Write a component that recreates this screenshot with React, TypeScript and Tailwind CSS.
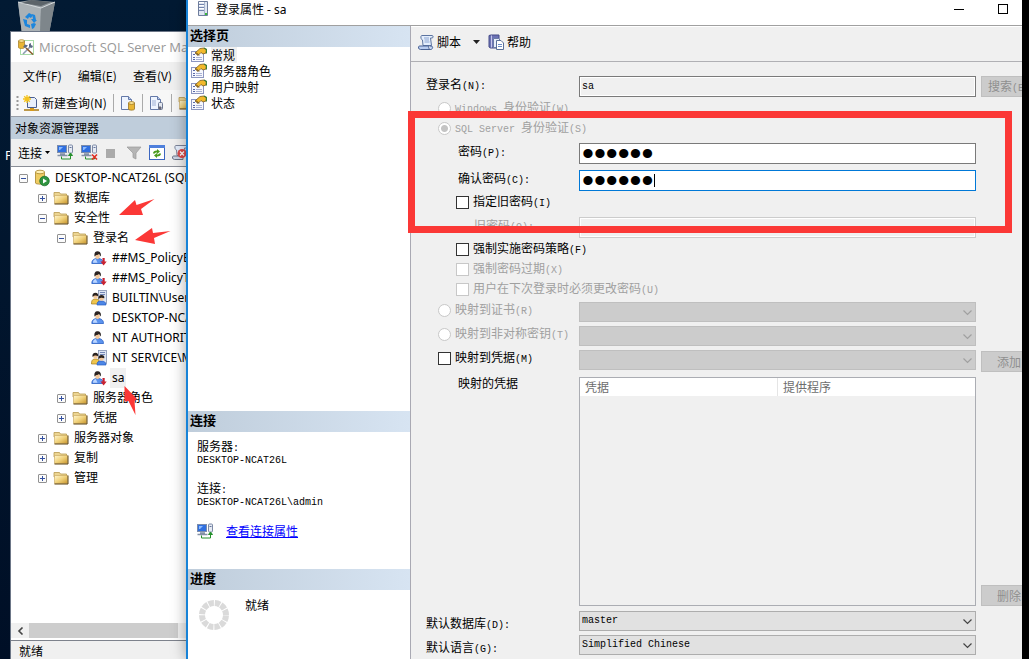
import type { ReactNode } from "react";

const cjk = "font-['Noto_Sans_CJK_SC',sans-serif]";

/* Han characters at 12px, Latin runs in a 6px-wide monospace face. */
function Mono({ text }: { text: string }) {
  const parts = text.match(/[\x00-\x7f]+|[^\x00-\x7f]+/g) ?? [];
  return (
    <>
      {parts.map((p, i) =>
        p.charCodeAt(0) < 128 ? (
          <span key={i} className="whitespace-pre font-['Liberation_Mono',monospace] text-[10px]">{p}</span>
        ) : (
          <span key={i}>{p}</span>
        ),
      )}
    </>
  );
}

function Folder() {
  return (
    <svg width="16" height="14" viewBox="0 0 16 14" className="shrink-0">
      <defs>
        <linearGradient id="fold" x1="0" y1="0" x2="1" y2="1">
          <stop offset="0" stopColor="#fff6cf" />
          <stop offset=".5" stopColor="#f0d27c" />
          <stop offset="1" stopColor="#c9962c" />
        </linearGradient>
      </defs>
      <path d="M1 3V1.500h5.500l1 1.500h6v3H1z" fill="#ecd592" stroke="#b8994f" strokeWidth=".8" />
      <path d="M1.500 4.500h13v8h-13z" fill="url(#fold)" stroke="#c4a35a" strokeWidth=".6" />
      <path d="M1.500 13h13.500V4.500" fill="none" stroke="#5e4410" />
    </svg>
  );
}

function Person({ mark }: { mark?: boolean }) {
  return (
    <svg width="16" height="16" viewBox="0 0 16 16" className="shrink-0">
      <path d="M.8 13.500c0-3.500 2-5 5.700-5s6 1.500 6 5z" fill="#5b93ee" stroke="#2a5fc4" strokeWidth=".8" />
      <path d="M2 12.800c0-2.300 1-3.300 2.800-3.700l1.700 3.700z" fill="#bcd6ff" />
      <ellipse cx="6.500" cy="6" rx="2.300" ry="3" fill="#f1c79c" />
      <path d="M3.500 6.500C3 2.500 4.500 1.200 6.500 1.200s4 1.300 3.300 5.300C9 5.500 8.500 4.500 8 4c-1 1-2.500 1-3 1.200z" fill="#2b2320" />
      {mark && <path d="M11.500 8h2.200v3.500h2L12.600 15.500 9.500 11.500h2z" fill="#c92332" />}
    </svg>
  );
}

function Group() {
  return (
    <svg width="16" height="16" viewBox="0 0 16 16" className="shrink-0">
      <rect x="7.500" y=".5" width="8" height="13" fill="#dfe6f3" stroke="#8290b0" strokeWidth=".8" />
      <path d="M9 2.500h5M9 4.500h5" stroke="#7487b5" />
      <path d="M.5 14c0-3 .5-5 4-5s4 2 4 5z" fill="#f0c64c" stroke="#a07a20" strokeWidth=".7" />
      <circle cx="4.500" cy="6.500" r="2.300" fill="#f1c79c" />
      <path d="M1.500 7C1 4 2.500 2.800 4.500 2.800S7.500 4 7.200 6.200C5 5.500 4 5 1.500 7z" fill="#2b2320" />
      <path d="M6 15c0-3 1-4 4-4s5 1 5 4z" fill="#4c86e6" stroke="#2a5fc4" strokeWidth=".7" />
      <circle cx="10.500" cy="8.500" r="2.200" fill="#f1c79c" />
      <path d="M7.500 9C7 6 8.500 4.900 10.500 4.900s3.200 1 2.800 3.400c-2-.5-3-1-5.800.7z" fill="#2b2320" />
    </svg>
  );
}

function ServerDb() {
  return (
    <svg width="16" height="18" viewBox="0 0 16 18" className="shrink-0">
      <path d="M1.500 3v11c0 1.500 9 1.500 9 0V3z" fill="#efcc62" stroke="#a8852c" strokeWidth=".8" />
      <ellipse cx="6" cy="3" rx="4.500" ry="1.800" fill="#fff0b4" stroke="#a8852c" strokeWidth=".8" />
      <circle cx="10.500" cy="12" r="4.800" fill="#2f9440" stroke="#156b28" strokeWidth=".7" />
      <path d="M9 9.500l4 2.500-4 2.500z" fill="#fff" />
    </svg>
  );
}

function Connect({ cross }: { cross?: boolean }) {
  return (
    <svg width="17" height="17" viewBox="0 0 17 17" className="shrink-0">
      <rect x=".5" y="1.500" width="9" height="7" fill="#2f6fe0" stroke="#7b8cab" />
      <path d="M2 3h4L3 6H2z" fill="#8dbcff" />
      <path d="M3 10h5M.5 11.500h10" stroke="#8390a6" strokeWidth="1.500" />
      <rect x="11.500" y="1" width="4" height="8" rx="1" fill="#e6ebf4" stroke="#7d8aa6" />
      <path d="M12.500 3.500h2" stroke="#66759a" />
      <path d="M4.500 12.500v2.500h9v-2" fill="none" stroke="#25902c" />
      {cross ? (
        <path d="M11 10.500l5 5M16 10.500l-5 5" stroke="#df2c20" strokeWidth="1.600" />
      ) : (
        <path d="M13.500 14v-4M11.500 11.500l2-2.500 2 2.500z" fill="#25902c" stroke="#25902c" />
      )}
    </svg>
  );
}

function PageDoc({ kind }: { kind: "db" | "server" }) {
  return (
    <svg width="16" height="16" viewBox="0 0 16 16" className="shrink-0">
      <path d="M1.500 1.500h7l3 3v10h-10z" fill="#eef4ff" stroke="#6479a8" />
      <path d="M8.500 1.500v3h3" fill="#b9cbee" stroke="#6479a8" />
      {kind === "db" ? (
        <>
          <path d="M8.500 8v6c0 1.500 6 1.500 6 0V8z" fill="#e9b634" stroke="#9b7420" strokeWidth=".8" />
          <ellipse cx="11.500" cy="8" rx="3" ry="1.400" fill="#ffe99c" stroke="#9b7420" strokeWidth=".8" />
        </>
      ) : (
        <>
          <path d="M3 6h4M3 8h4M3 10h4" stroke="#9fb0d4" />
          <rect x="9.500" y="7.500" width="4" height="7" rx="1" fill="#e4e8f0" stroke="#6c7894" />
          <path d="M9 13l2-2 2 2-2 2z" fill="#667" />
        </>
      )}
    </svg>
  );
}

function PropertySheet() {
  return (
    <svg width="16" height="16" viewBox="0 0 16 16" className="shrink-0">
      <rect x=".5" y="4.500" width="12" height="10" fill="#f7f8fd" stroke="#8c96c0" />
      <path d="M2 7.500h2M2 10.500h2M2 12.500h2" stroke="#596aa8" />
      <path d="M5 10.500h6M5 12.500h6" stroke="#a9b2d4" />
      <path d="M4 6l5-4.500 4-.5 2.500 2-.5 3-3 1-2-1.500-3 3z" fill="#f2b92c" stroke="#7b5a22" strokeWidth=".8" />
      <path d="M5 5.500l3 3" stroke="#4b3a28" />
      <path d="M13 1l2.500 1.500v4" stroke="#3f7d34" fill="none" strokeWidth="1.300" />
    </svg>
  );
}

function Scroll() {
  return (
    <svg width="17" height="17" viewBox="0 0 17 17" className="shrink-0">
      <path d="M4 1.500h10c1.500 0 1.500 2.500 0 2.500h-1.500l1 7.500H5L4.500 6C3 6 2 1.500 4 1.500z" fill="#e4eefc" stroke="#5c74a0" />
      <path d="M6 4h5M6.500 6h4.500M6.500 8h5" stroke="#8aa3cf" />
      <path d="M1.500 12h9.500c-.8 1.500 0 3.500 1.500 3.500H2.500C0 15.500 0 12 1.500 12zM12.500 15.500c2.500 0 3-3.500.5-3.500h-1" fill="#b9cdf0" stroke="#4a6394" />
    </svg>
  );
}

function Help() {
  return (
    <svg width="17" height="17" viewBox="0 0 17 17" className="shrink-0">
      <path d="M1 1.500L3 1h8v13H2.500L1 13z" fill="#6d73b5" stroke="#454b88" />
      <path d="M3.500 1.500v12" stroke="#c5c8ea" />
      <path d="M5.500 4.500h5l2 2v7h-7z" fill="#e9effb" stroke="#6a7ca6" />
      <path d="M8.500 6.500h4.500l2.500 2.500v6.500h-7z" fill="#fff" stroke="#5a7099" />
      <path d="M10 10.500h4M10 12.500h4" stroke="#6c8cc7" />
    </svg>
  );
}

function Spinner() {
  return (
    <svg width="32" height="32" viewBox="0 0 32 32">
      <circle cx="16" cy="16" r="12" fill="none" stroke="#dadada" strokeWidth="6" strokeDasharray="5.283 1" strokeDashoffset="-.5" />
    </svg>
  );
}

function Expander({ open }: { open: boolean }) {
  return (
    <svg width="9" height="9" viewBox="0 0 9 9" className="shrink-0">
      <rect x=".5" y=".5" width="8" height="8" rx=".5" fill="#fbfbfb" stroke="#919191" />
      <path d={open ? "M2 4.500h5" : "M2 4.500h5M4.500 2v5"} stroke="#3350a0" />
    </svg>
  );
}

function RecycleBin() {
  return (
    <svg width="40" height="34" viewBox="0 0 40 34">
      <path d="M1 2L14 0l24 2-6 32H5z" fill="#8f979c" />
      <path d="M1 2l23 6-1 26H5z" fill="#aab1b5" />
      <path d="M24 8l14-6-6 32h-9z" fill="#7e868b" />
      <path d="M1 2l23 6 14-6" fill="none" stroke="#d5dadd" />
      <path d="M5 3l9-3 20 2-10 4z" fill="#5c646a" />
      <g fill="#1d86dd">
        <path d="M8 17l4-4 4 2-2 3-2-1-1 2z" />
        <path d="M15 14l3 1 1 5 1 0-3 3-3-4h2z" />
        <path d="M6 19l4 1 0 4 3 1v3l-5-2z" />
        <path d="M14 24l3-1 2 1-2 4-2 1z" />
      </g>
    </svg>
  );
}

type Node = { depth: number; label: string; icon: ReactNode; open?: boolean; selected?: boolean };

const tree: Node[] = [
  { depth: 0, label: "DESKTOP-NCAT26L (SQL Server)", icon: <ServerDb />, open: true },
  { depth: 1, label: "数据库", icon: <Folder />, open: false },
  { depth: 1, label: "安全性", icon: <Folder />, open: true },
  { depth: 2, label: "登录名", icon: <Folder />, open: true },
  { depth: 3, label: "##MS_PolicyEventProcessingLogin##", icon: <Person mark /> },
  { depth: 3, label: "##MS_PolicyTsqlExecutionLogin##", icon: <Person mark /> },
  { depth: 3, label: "BUILTIN\\Users", icon: <Group /> },
  { depth: 3, label: "DESKTOP-NCAT26L\\admin", icon: <Person /> },
  { depth: 3, label: "NT AUTHORITY\\SYSTEM", icon: <Person /> },
  { depth: 3, label: "NT SERVICE\\MSSQLSERVER", icon: <Group /> },
  { depth: 3, label: "sa", icon: <Person mark />, selected: true },
  { depth: 2, label: "服务器角色", icon: <Folder />, open: false },
  { depth: 2, label: "凭据", icon: <Folder />, open: false },
  { depth: 1, label: "服务器对象", icon: <Folder />, open: false },
  { depth: 1, label: "复制", icon: <Folder />, open: false },
  { depth: 1, label: "管理", icon: <Folder />, open: false },
];

const indent = ["pl-2", "pl-[27px]", "pl-[46px]", "pl-[80px]"];

function StudioWindow() {
  return (
    <section className="absolute bottom-0 left-[10px] top-[31px] flex w-[420px] flex-col overflow-hidden border-l border-t border-[#6c7687] bg-[#f0f0f0] whitespace-nowrap text-xs text-black">
      <header className="flex h-[30px] shrink-0 items-center gap-1 bg-white pl-[7px]">
        <svg width="17" height="17" viewBox="0 0 17 17" className="shrink-0">
          <rect x="2.500" y="1.500" width="13" height="14" fill="none" stroke="#51b84f" strokeDasharray="1 1" />
          <path d="M.5 2v6.500c0 1.300 6 1.300 6 0V2z" fill="#e9b634" stroke="#a07a20" strokeWidth=".7" />
          <ellipse cx="3.500" cy="2" rx="3" ry="1.300" fill="#ffe99c" stroke="#a07a20" strokeWidth=".7" />
          <path d="M5 15l8-8" stroke="#8c9bb2" strokeWidth="1.600" />
          <path d="M8 9l7 6.500" stroke="#8a5a2c" strokeWidth="1.600" />
          <path d="M5 8l2-2.500 3 1-2.500 2.500zM11 5l2-1v2l2 1-1 2-3-1z" fill="#5c6c86" />
        </svg>
        <h1 className="font-['Open_Sans','Noto_Sans',sans-serif] text-[13px] leading-4 text-[#999]">Microsoft SQL Server Management Studio</h1>
      </header>
      <nav className="flex h-[28px] shrink-0 items-center gap-4 pl-3">
        <button>文件(F)</button>
        <button>编辑(E)</button>
        <button>查看(V)</button>
      </nav>
      <div className="flex h-[26px] shrink-0 items-center bg-[#f7f7f7] pl-[5px]">
        <svg width="3" height="16" viewBox="0 0 3 16" className="mr-1 shrink-0">
          <path d="M1.500 1v15" stroke="#999" strokeWidth="2" strokeDasharray="2 2" />
        </svg>
        <button className="flex items-center gap-[2px]">
          <svg width="17" height="17" viewBox="0 0 17 17">
            <path d="M4.500 2.500h7l2 2v8h-9z" fill="#e8effc" stroke="#4b5f8f" />
            <path d="M4 0v8M0 4h8M1.200 1.200l5.600 5.600M6.800 1.200L1.200 6.800" stroke="#f5c31c" strokeWidth="1.300" />
            <path d="M1 15h15" stroke="#a87a10" strokeWidth="1.500" />
            <rect x="7" y="13" width="4" height="3" fill="#d79a1c" />
          </svg>
          新建查询(N)
        </button>
        <span className="mx-[6px] h-[18px] w-px bg-[#aaa]" />
        <button aria-label="数据库引擎查询"><PageDoc kind="db" /></button>
        <span className="mx-[6px] h-[18px] w-px bg-[#aaa]" />
        <button aria-label="分析服务查询"><PageDoc kind="server" /></button>
        <span className="mx-[6px] h-[18px] w-px bg-[#aaa]" />
        <Folder />
      </div>
      <h2 className="flex h-[23px] shrink-0 items-center border-t border-[#9a9fa8] bg-[#bfcddb] pl-1 text-xs">对象资源管理器</h2>
      <div className="flex h-[28px] shrink-0 items-center border-b border-[#8b8f98] pl-[7px]">
        <button className="mr-[6px] flex items-center gap-[2px]">
          连接
          <svg width="7" height="4" viewBox="0 0 7 4"><path d="M1 0h5L3.500 3z" /></svg>
        </button>
        <div className="flex items-center gap-[7px]">
          <button aria-label="连接对象"><Connect /></button>
          <button aria-label="断开连接"><Connect cross /></button>
          <svg width="14" height="12" viewBox="0 0 14 12" className="shrink-0"><rect x="1" y="2" width="9" height="9" fill="#aaa" /></svg>
          <svg width="16" height="14" viewBox="0 0 16 14" className="shrink-0"><path d="M1 1h14l-5 6v6l-3-1.500V7z" fill="#b5b5b5" stroke="#999" strokeWidth=".7" /></svg>
          <svg width="16" height="15" viewBox="0 0 16 15" className="shrink-0">
            <rect x=".5" y=".5" width="15" height="14" fill="#fff" stroke="#3c66c0" />
            <rect x="0" y="0" width="16" height="3" fill="#4f80dc" />
            <path d="M4 8.500c0-2 1.500-3 4-3V4l3 2.500L8 9V7.500c-1.500 0-2 .5-2 1zM12 8.500c0 2-1.500 3-4 3V13l-3-2.500L8 8v1.500c1.500 0 2-.5 2-1z" fill="#4b9b1d" />
          </svg>
          <svg width="17" height="17" viewBox="0 0 17 17" className="shrink-0">
            <path d="M4 1.500h10c1.500 0 1.500 2.500 0 2.500h-1.500l1 7.500H5L4.500 6C3 6 2 1.500 4 1.500z" fill="#e4eefc" stroke="#7d8499" />
            <path d="M1.500 12h9.500v3.500H2.500C0 15.500 0 12 1.500 12z" fill="#ccd4e4" stroke="#6b7488" />
            <circle cx="10" cy="9.500" r="4.500" fill="#dc4a4a" />
            <path d="M8 7.500l4 4M12 7.500l-4 4" stroke="#fff" strokeWidth="1.300" />
          </svg>
        </div>
      </div>
      <ul className="min-h-0 flex-1 overflow-hidden bg-white pt-px">
        {tree.map((n) => (
          <li key={n.label} className={`flex h-5 items-center ${indent[n.depth]}`}>
            {n.open !== undefined && <span className="mr-[6px]"><Expander open={n.open} /></span>}
            {n.icon}
            <span className={`ml-[3px] px-[2px] font-['Noto_Sans','Noto_Sans_CJK_SC',sans-serif] leading-5 ${n.selected ? "bg-[#f0f0f0]" : ""}`}>{n.label}</span>
          </li>
        ))}
      </ul>
      <div className="flex h-[18px] shrink-0 items-start border-b border-[#7d828c] bg-white">
        <span className="flex h-[15px] w-[18px] items-center justify-center bg-[#f0f0f0]">
          <svg width="7" height="8" viewBox="0 0 7 8"><path d="M5.500.5L2 4l3.500 3.500" fill="none" stroke="#444" strokeWidth="1.600" /></svg>
        </span>
        <span className="h-[15px] w-[149px] bg-[#cdcdcd]" />
        <span className="h-[15px] flex-1 bg-[#f0f0f0]" />
      </div>
      <footer className="flex h-[18px] shrink-0 items-end pl-2 leading-4">就绪</footer>
    </section>
  );
}

function Arrows() {
  return (
    <svg width="80" height="230" viewBox="0 0 80 230" className="pointer-events-none absolute left-[110px] top-[190px]">
      <g fill="#fb3836">
        <path d="M9 25L25 10l1.500 5L44.500 9 31 19l2 6z" />
        <path d="M25 50L42 38l1 5 17.500-2L44 48l1 6z" />
        <path d="M14.500 196l12.500 13-2.500 2 1 14-7-14-4 .5z" />
      </g>
    </svg>
  );
}

function SectionHeader({ children }: { children: ReactNode }) {
  return <h3 className="h-[21px] shrink-0 bg-gradient-to-r from-[#bfcddb] to-[#d7e4f2] pl-[2px] text-[13px] font-bold leading-[18px]">{children}</h3>;
}

const field = "h-[21px] w-full min-w-0 border px-[2px] font-['Liberation_Mono',monospace] text-[10px] outline-none";

const passwordField = "block h-[21px] w-full border bg-white px-[2px] font-['Liberation_Sans',sans-serif] text-[34px] leading-none outline-none";

function Row({ label, id, pad, dim, gap, align = "items-start", children, action }: {
  label: string; id?: string; pad: string; dim?: boolean; gap: string; align?: string; children: ReactNode; action?: string;
}) {
  return (
    <div className={`flex shrink-0 ${gap} ${align}`}>
      <label htmlFor={id} className={`h-4 w-[168px] shrink-0 leading-4 ${pad} ${dim ? "text-[#a0a0a0]" : ""}`}><Mono text={label} /></label>
      <div className="min-w-0 flex-1">{children}</div>
      <div className="w-[46px] shrink-0 pl-[5px]">
        {action && <ActionButton>{action}</ActionButton>}
      </div>
    </div>
  );
}

function ActionButton({ children }: { children: string }) {
  return <button disabled className="block h-[21px] w-[56px] border border-[#bfbfbf] bg-[#ccc] text-[#8f8f8f]"><Mono text={children} /></button>;
}

function Option({ type, label, pad, gap = "", checked, disabled }: {
  type: "radio" | "checkbox"; label: string; pad: string; gap?: string; checked?: boolean; disabled?: boolean;
}) {
  return (
    <label className={`flex h-5 shrink-0 items-center gap-1 ${pad} ${gap} ${disabled ? "text-[#a0a0a0]" : ""}`}>
      <Tick type={type} checked={checked} disabled={disabled} />
      <span className="whitespace-nowrap leading-4"><Mono text={label} /></span>
    </label>
  );
}

function Tick({ type, checked, disabled }: { type: "radio" | "checkbox"; checked?: boolean; disabled?: boolean }) {
  return (
    <input
      type={type}
      name={type === "radio" ? "auth" : undefined}
      defaultChecked={checked}
      disabled={disabled}
      className={`h-[13px] w-[13px] shrink-0 appearance-none border bg-white ${type === "radio" ? "rounded-full checked:bg-[radial-gradient(circle,#c4c4c4_0_3px,#fff_4px)]" : ""} ${disabled ? "border-[#c8c8c8]" : "border-[#333]"}`}
    />
  );
}

function Drop({ id, value, disabled, label }: { id: string; value?: string; disabled?: boolean; label?: string }) {
  return (
    <div className="relative">
      <select id={id} aria-label={label} disabled={disabled} className={`block h-5 w-full appearance-none border px-[2px] font-['Liberation_Mono',monospace] text-[10px] opacity-100 ${disabled ? "border-[#bfbfbf] bg-[#ccc]" : "border-[#adadad] bg-[#e1e1e1]"}`}>
        <option>{value ?? ""}</option>
      </select>
      <svg width="9" height="6" viewBox="0 0 9 6" className="pointer-events-none absolute right-1 top-2">
        <path d="M.5.5l4 4 4-4" fill="none" stroke={disabled ? "#a0a0a0" : "#444"} strokeWidth="1.200" />
      </svg>
    </div>
  );
}

function OptionDrop({ type, label, id, disabled, gap, action }: {
  type: "radio" | "checkbox"; label: string; id: string; disabled?: boolean; gap: string; action?: string;
}) {
  return (
    <div className={`flex h-5 shrink-0 items-start ${gap}`}>
      <label className={`flex h-4 w-[168px] shrink-0 items-center gap-1 pl-[27px] leading-4 ${disabled ? "text-[#a0a0a0]" : ""}`}>
        <Tick type={type} disabled={disabled} />
        <span className="whitespace-nowrap"><Mono text={label} /></span>
      </label>
      <div className="min-w-0 flex-1"><Drop id={id} label={label} disabled /></div>
      <div className="w-[46px] shrink-0 pl-[5px] pt-px">{action && <ActionButton>{action}</ActionButton>}</div>
    </div>
  );
}

function LoginForm() {
  return (
    <form className="flex min-h-0 flex-1 flex-col overflow-hidden pb-1">
      <Row label="登录名(N):" id="login" pad="pl-[15px]" gap="mt-[14px]" action="搜索(E)">
        <input id="login" readOnly defaultValue="sa" className={`${field} block border-[#7a7a7a] bg-[#f0f0f0] shadow-[inset_0_0_0_1px_#fff]`} />
      </Row>
      <Option type="radio" label="Windows 身份验证(W)" pad="pl-[27px]" gap="mt-px" disabled />
      <Option type="radio" label="SQL Server 身份验证(S)" pad="pl-[27px]" checked disabled />
      <Row label="密码(P):" id="pw" pad="pl-[47px]" gap="mt-[5px]">
        <input id="pw" type="password" defaultValue="secret" className={`${passwordField} border-[#7a7a7a]`} />
      </Row>
      <Row label="确认密码(C):" id="pw2" pad="pl-[47px]" gap="mt-[6px]">
        <div className="relative">
          <input id="pw2" type="password" defaultValue="secret" className={`${passwordField} border-[#0078d7]`} />
          <span className="absolute left-[75px] top-1 h-[13px] w-px bg-black" />
        </div>
      </Row>
      <Option type="checkbox" label="指定旧密码(I)" pad="pl-[45px]" gap="mt-px" />
      <Row label="旧密码(O):" id="old" pad="pl-[63px]" gap="mt-[5px]" dim>
        <input id="old" type="password" disabled className={`${field} block border-[#ccc] bg-[#f0f0f0] shadow-[inset_0_0_0_1px_#fff]`} />
      </Row>
      <Option type="checkbox" label="强制实施密码策略(F)" pad="pl-[45px]" gap="mt-px" />
      <Option type="checkbox" label="强制密码过期(X)" pad="pl-[45px]" disabled />
      <Option type="checkbox" label="用户在下次登录时必须更改密码(U)" pad="pl-[45px]" disabled />
      <OptionDrop type="radio" label="映射到证书(R)" id="cert" disabled gap="mt-[3px]" />
      <OptionDrop type="radio" label="映射到非对称密钥(T)" id="key" disabled gap="mt-1" />
      <OptionDrop type="checkbox" label="映射到凭据(M)" id="cred" gap="mt-1" action="添加" />
      <div className="mt-[7px] flex min-h-0 flex-1">
        <span className="w-[168px] shrink-0 pl-[47px] leading-3">映射的凭据</span>
        <div className="min-w-0 flex-1 border border-[#abadb3]">
          <table className="w-full table-fixed border-collapse bg-white text-[#6d6d6d]">
            <thead>
              <tr className="h-[18px]">
                <th className="border-r border-[#e5e5e5] p-0 pl-[5px] text-left font-normal leading-[18px]">凭据</th>
                <th className="p-0 pl-[5px] text-left font-normal leading-[18px]">提供程序</th>
              </tr>
            </thead>
          </table>
        </div>
        <div className="flex w-[46px] shrink-0 items-end pl-[5px]">
          <div className="shrink-0"><ActionButton>删除</ActionButton></div>
        </div>
      </div>
      <Row label="默认数据库(D):" id="db" pad="pl-[15px]" gap="mt-[5px]" align="items-end"><Drop id="db" value="master" /></Row>
      <Row label="默认语言(G):" id="lang" pad="pl-[15px]" gap="mt-1" align="items-end"><Drop id="lang" value="Simplified Chinese" /></Row>
    </form>
  );
}

function LoginDialog() {
  const pages = ["常规", "服务器角色", "用户映射", "状态"];
  return (
    <section className="absolute inset-y-0 left-[186px] right-[7px] flex flex-col border-l-2 border-[#1883d7] bg-white text-xs text-black shadow-[0_0_14px_rgba(0,0,0,0.35)]">
      <header className="flex h-[25px] shrink-0 items-start pl-2 pr-[14px]">
        <svg width="14" height="18" viewBox="0 0 14 18" className="shrink-0">
          <path d="M2.500 1.500h9v14h-9z" fill="#dfe6f2" stroke="#6d7c9c" />
          <path d="M8.500 2v13" stroke="#a9b5cc" />
          <path d="M3 4.500h5M3 7.500h5M3 10.500h5" stroke="#7485ae" />
          <path d="M3 2.500h5M3 5.500h5M3 8.500h5" stroke="#fff" />
          <rect x="9" y="13" width="2" height="2" fill="#38b838" />
        </svg>
        <h2 className="ml-[6px] font-['Noto_Sans','Noto_Sans_CJK_SC',sans-serif] leading-5">登录属性 - sa</h2>
        <div className="ml-auto flex gap-[34px] pt-1">
          <button aria-label="最小化"><svg width="10" height="10" viewBox="0 0 10 10"><path d="M0 5.500h10" stroke="#000" /></svg></button>
          <button aria-label="最大化"><svg width="10" height="10" viewBox="0 0 10 10"><rect x=".5" y=".5" width="9" height="9" fill="none" stroke="#000" /></svg></button>
        </div>
      </header>
      <div className="flex min-h-0 flex-1 border-t border-[#a0a0a0]">
        <aside className="flex w-[223px] shrink-0 flex-col border-r border-[#a9a9b3]">
          <SectionHeader>选择页</SectionHeader>
          <ul className="flex-1">
            {pages.map((p, i) => (
              <li key={p} className="flex h-4 items-center gap-1 pl-[3px]">
                <PropertySheet />
                <span className={`leading-4 ${i === 0 ? "bg-[#f0f0f0] pr-[2px]" : ""}`}>{p}</span>
              </li>
            ))}
          </ul>
          <SectionHeader>连接</SectionHeader>
          <div className="h-[137px] shrink-0 px-[9px] pt-2">
            <p className="h-3 leading-3"><Mono text="服务器:" /></p>
            <p className="h-3 leading-3"><Mono text="DESKTOP-NCAT26L" /></p>
            <p className="mt-[18px] h-3 leading-3"><Mono text="连接:" /></p>
            <p className="h-3 leading-3"><Mono text="DESKTOP-NCAT26L\admin" /></p>
            <p className="mt-[17px] flex h-4 items-center gap-3 leading-4">
              <Connect />
              <a href="#connection" className="text-[#0000ff] underline">查看连接属性</a>
            </p>
          </div>
          <SectionHeader>进度</SectionHeader>
          <div className="flex h-[69px] shrink-0 gap-[15px] pl-[10px] pt-[7px]">
            <div className="pt-[2px]"><Spinner /></div>
            <span className="leading-4">就绪</span>
          </div>
        </aside>
        <main className="flex min-w-0 flex-1 flex-col overflow-hidden border-t border-white bg-[#f0f0f0]">
          <div className="flex h-[35px] shrink-0 items-center border-b border-[#b0b0b4] pb-1 pl-[7px]">
            <button className="flex items-center gap-[2px]"><Scroll />脚本</button>
            <button aria-label="脚本选项" className="ml-[11px] mr-[7px]">
              <svg width="9" height="5" viewBox="0 0 9 5"><path d="M1 0h7L4.500 4z" fill="#222" /></svg>
            </button>
            <button className="flex items-center gap-[2px]"><Help />帮助</button>
          </div>
          <LoginForm />
        </main>
      </div>
      <div className="pointer-events-none absolute left-[220px] right-[10px] top-[111px] h-[122px] border-[7px] border-[#fb3836]" />
    </section>
  );
}

export default function App() {
  return (
    <div className={`relative h-screen overflow-hidden bg-black ${cjk}`}>
      <div className="absolute inset-y-0 left-0 w-[400px] bg-gradient-to-b from-[#021a33] to-[#000f26]">
        <span className="absolute left-[17px] top-0"><RecycleBin /></span>
        <span className="absolute left-[5px] top-[147px] text-xs leading-4 text-white">P</span>
      </div>
      <StudioWindow />
      <Arrows />
      <LoginDialog />
    </div>
  );
}
